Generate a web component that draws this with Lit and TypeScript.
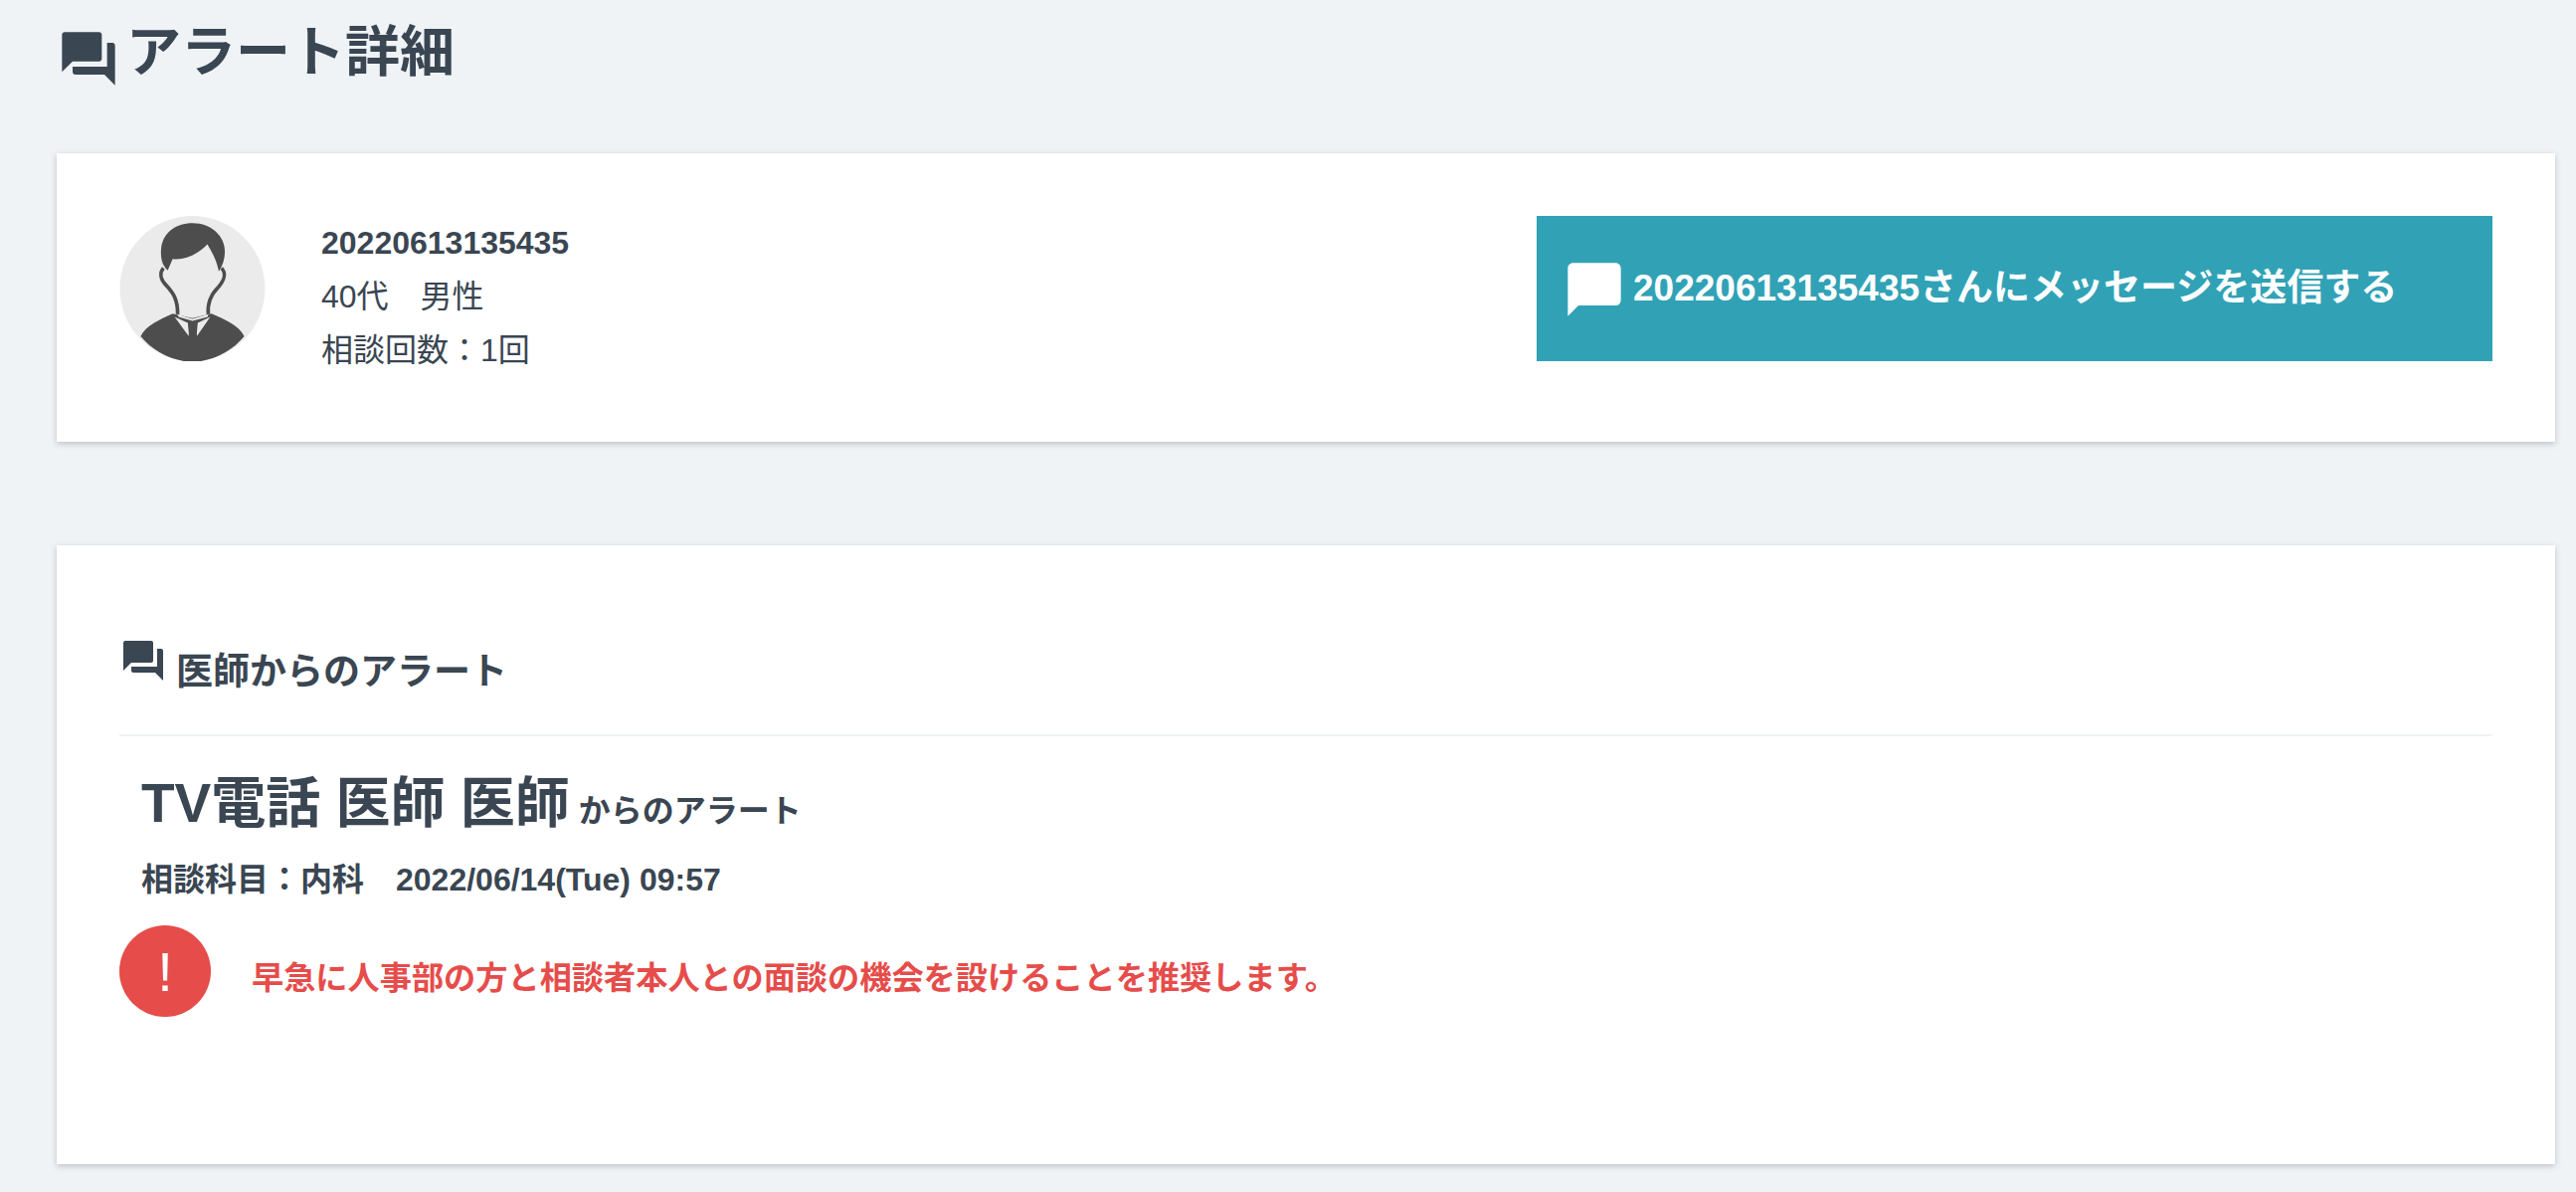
import { LitElement, html, css, svg } from "lit";
import { customElement } from "lit/decorators.js";

const forum = svg`<path d="M21 6h-2v9H6v2c0 .55.45 1 1 1h11l4 4V7c0-.55-.45-1-1-1zm-4 6V3c0-.55-.45-1-1-1H3c-.55 0-1 .45-1 1v14l4-4h10c.55 0 1-.45 1-1z"/>`;
const bubble = svg`<path d="M20 2H4c-1.1 0-2 .9-2 2v18l4-4h14c1.1 0 2-.9 2-2V4c0-1.1-.9-2-2-2z"/>`;

@customElement("app-root")
export class AppRoot extends LitElement {
  static styles = css`
    :host {
      display: block;
      min-height: 100vh;
      background: #eff3f6;
      color: #3a4652;
      font-family: "Liberation Sans", "Noto Sans CJK JP", sans-serif;
    }
    .page { padding: 27px 21px 0 57px; }
    .title { display: flex; align-items: center; gap: 6px; height: 64px; margin: 0 0 63px; font-size: 55px; font-weight: 700; line-height: 64px; }
    .title span { position: relative; top: -7px; }
    .title svg { width: 64px; height: 64px; fill: #3a4652; flex: none; }
    .card { background: #fff; box-shadow: 0 2px 6px rgba(60, 70, 85, .28); }
    .user { display: flex; align-items: stretch; justify-content: space-between; padding: 63px 63px 81px 63px; height: 146px; margin-bottom: 104px; }
    .who { display: flex; gap: 56px; }
    .avatar { width: 147px; height: 146px; flex: none; display: block; }
    .info { font-size: 32px; line-height: 54px; }
    .info .id { font-weight: 700; font-size: 32px; }
    .send { display: flex; align-items: center; width: 961px; height: 146px; padding-left: 26px; box-sizing: border-box; background: #31a2b6; color: #fff; font-size: 37px; font-weight: 700; gap: 7px; }
    .send svg { width: 64px; height: 64px; fill: #fff; flex: none; position: relative; top: 1px; }
    .send span { position: relative; top: -4px; }
    .alert-card { padding: 92px 63px 0 63px; height: 530px; }
    .head { display: flex; align-items: flex-end; gap: 9px; height: 57px; padding-bottom: 41px; border-bottom: 2px solid #eff3f6; font-size: 37px; font-weight: 700; }
    .head svg { width: 48px; height: 48px; fill: #3a4652; flex: none; align-self: flex-start; }
    .head span { line-height: 44px; position: relative; top: 1px; }
    .doc { margin: 34px 0 0 22px; font-size: 55px; font-weight: 700; line-height: 66px; }
    .doc small { font-size: 32px; }
    .meta { margin: 16px 0 0 22px; font-size: 32px; font-weight: 700; line-height: 40px; }
    .msg { display: flex; align-items: center; gap: 41px; margin-top: 26px; color: #e64c4a; font-size: 32.2px; font-weight: 700; }
    .msg-text { padding-top: 8px; }
    .mark { width: 92px; height: 92px; border-radius: 50%; background: #e64c4a; color: #fff; flex: none; display: flex; align-items: center; justify-content: center; font-size: 56px; font-weight: 400; }
  `;

  render() {
    return html`
      <div class="page">
        <h1 class="title">
          <svg viewBox="0 0 24 24">${forum}</svg><span>アラート詳細</span>
        </h1>
        <section class="card user">
          <div class="who">
            <svg class="avatar" viewBox="30 20 440 440">
              <defs><clipPath id="c"><rect x="30" y="20" width="440" height="440" /></clipPath></defs>
              <circle cx="250" cy="240" r="220" fill="#ebebeb" />
              <g clip-path="url(#c)" fill="#4d4d4d">
                <path d="M175 185C165 175 152 160 155 120C160 70 200 42 250 42C310 42 350 85 348 130C348 150 342 170 330 188C322 150 308 128 295 106C270 135 225 155 190 150Z" />
                <path d="M162 178C150 192 152 212 172 232C190 252 206 272 205 318M338 178C352 192 348 214 328 236C308 256 294 280 298 318" fill="none" stroke="#4d4d4d" stroke-width="11" />
                <path d="M190 316C150 335 110 350 93 385C130 430 190 462 250 462C310 462 370 430 407 385C390 350 350 335 308 316L250 330Z" />
                <path d="M196 326L236 344L240 386ZM304 326L266 344L262 386Z" fill="#ebebeb" />
                <path d="M205 318L250 332L298 318L296 326L250 338L208 326Z" fill="#ebebeb" />
                <path d="M236 340H266L259 358L266 392L250 400L236 392L243 358Z" />
              </g>
            </svg>
            <div class="info">
              <div class="id">20220613135435</div>
              <div>40代　男性</div>
              <div>相談回数：1回</div>
            </div>
          </div>
          <div class="send">
            <svg viewBox="0 0 24 24">${bubble}</svg><span>20220613135435さんにメッセージを送信する</span>
          </div>
        </section>
        <section class="card alert-card">
          <div class="head">
            <svg viewBox="0 0 24 24">${forum}</svg><span>医師からのアラート</span>
          </div>
          <div class="doc">TV電話 医師 医師<small> からのアラート</small></div>
          <div class="meta">相談科目：内科　2022/06/14(Tue) 09:57</div>
          <div class="msg">
            <div class="mark">!</div>
            <div class="msg-text">早急に人事部の方と相談者本人との面談の機会を設けることを推奨します。</div>
          </div>
        </section>
      </div>
    `;
  }
}
